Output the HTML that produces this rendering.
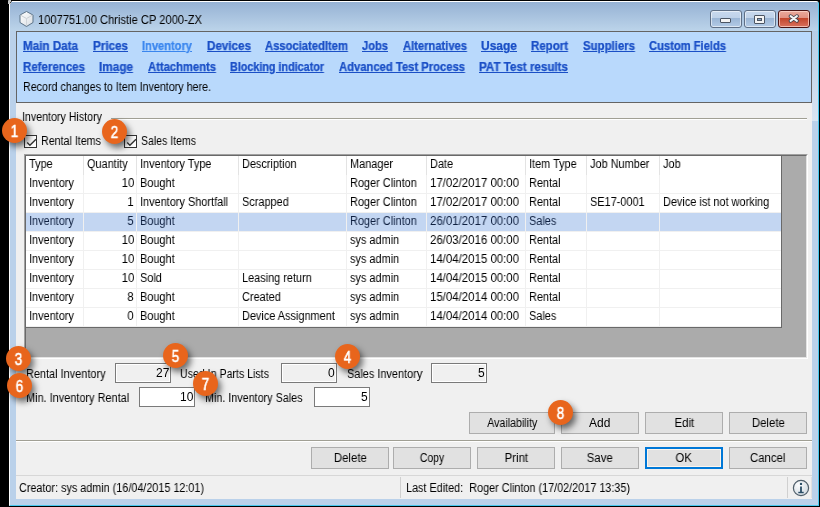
<!DOCTYPE html>
<html><head><meta charset="utf-8">
<style>
*{margin:0;padding:0;box-sizing:border-box}
html,body{width:820px;height:507px;overflow:hidden;background:#000}
body{position:relative;font-family:"Liberation Sans",sans-serif;font-size:12px;color:#000}
.a{position:absolute}
.t{position:absolute;white-space:pre;line-height:1.117;will-change:transform}
.frame{left:9px;top:1px;width:810px;height:505px;background:#bad1ea;border-left:1px solid #fff;border-top:1px solid #fff;border-right:1px solid #48c8ee;border-bottom:1px solid #48c8ee;border-top-left-radius:3px;border-top-right-radius:3px}
.title{left:10px;top:2px;width:808px;height:29px;background:linear-gradient(#96b2d4,#bcd4ea);border-top-left-radius:2px;border-top-right-radius:2px}
.content{left:16px;top:31px;width:796px;height:468px;background:#f0f0f0}
.panel{left:16px;top:31px;width:796px;height:72px;background:#b9d9fc;border:1px solid #646464}
.hl{position:absolute;height:1px}
.vl{position:absolute;width:1px}
.tbx{position:absolute;width:56px;height:20px;border:1px solid #7a7a7a;background:#fff}
.tbx.ro{background:#f0f0f0;box-shadow:inset 0 0 0 1px #fff}
.tbx span{position:absolute;right:1px;top:2px;line-height:14px;font-size:12px;display:inline-block;transform-origin:100% 0;transform:scaleX(1);will-change:transform}
.btn{position:absolute;width:78px;height:22px;border:1px solid #adadad;background:#e1e1e1;text-align:center;line-height:21px;font-size:12px}
.btn span{display:inline-block;transform:scaleX(.95);will-change:transform}
.btn.def{border:2px solid #0078d7;box-shadow:inset 0 0 0 1px #fdf5ec;line-height:19px}
.cb{position:absolute;width:13px;height:13px;border:1px solid #333;background:#fff}
.badge{position:absolute;width:25px;height:25px;border-radius:50%;background:#e8651c;color:#fff;font-weight:normal;font-size:16px;line-height:25px;text-align:center;box-shadow:3px 4px 6px rgba(0,0,0,.55);-webkit-text-stroke:.6px #fff}
.tbtn{position:absolute;top:10px;width:32px;height:18px;border:1px solid #5e6f86;border-radius:3px;background:linear-gradient(#c8d9ee 0,#bfd2e9 42%,#9ab5d5 44%,#b3cbe6 100%);box-shadow:inset 0 0 0 1px rgba(255,255,255,.55)}
.tbtn.cl{border-color:#4a1414;background:linear-gradient(#e9aa9c 0,#e29283 42%,#c1442a 44%,#d9725e 100%);box-shadow:inset 0 0 0 1px rgba(255,220,210,.7)}
.badge b{position:relative;top:1px;display:inline-block;font-weight:normal;transform:scaleX(.84);will-change:transform}
</style></head><body>
<div class="a frame"></div>
<div class="a title"></div>
<div class="a content"></div>
<div class="a" style="left:812px;top:31px;width:6px;height:90px;background:linear-gradient(#b7cde6,#d8e5f2)"></div>
<div class="a" style="left:8px;top:0;width:3px;height:4px;background:#c4c4c4;border-top-left-radius:1px"></div><div class="a" style="left:10px;top:2px;width:1px;height:1px;background:#404040"></div><div class="a" style="left:11px;top:1px;width:1px;height:1px;background:#606060"></div>

<!-- title icon -->
<svg class="a" style="left:18px;top:10px" width="17" height="18" viewBox="0 0 17 18">
 <defs><linearGradient id="cg" x1="0" y1="0" x2="1" y2="1"><stop offset="0" stop-color="#fff"/><stop offset="1" stop-color="#d8dde2"/></linearGradient></defs>
 <path d="M8.5 1.5 L15 5 L15 12.5 L8.5 16.5 L2 12.5 L2 5 Z" fill="url(#cg)" stroke="#5d7489" stroke-width="1"/>
 <path d="M2.5 5.2 L8.5 8.5 L14.5 5.2" fill="none" stroke="#c9ced4" stroke-width="1"/>
 <path d="M8.5 8.5 L8.5 16" stroke="#cfd4d9" stroke-width="1"/>
</svg>

<!-- title buttons -->
<div class="tbtn" style="left:710px"><div class="a" style="left:9px;top:7px;width:11px;height:5px;background:#f4f4f4;border:1px solid #4b5563;border-radius:1px"></div></div>
<div class="tbtn" style="left:744px"><div class="a" style="left:9px;top:4px;width:11px;height:9px;background:#f4f4f4;border:1px solid #4b5563;border-radius:1px"><div class="a" style="left:2px;top:2px;width:5px;height:3px;background:#8aa6c6;border:1px solid #4b5563"></div></div></div>
<div class="tbtn cl" style="left:778px">
<svg class="a" style="left:7.5px;top:3px" width="14" height="11" viewBox="0 0 14 11"><path d="M3.6 2.2 L9.9 6.8 M9.9 2.2 L3.6 6.8" stroke="#3a3f4a" stroke-width="3.7" stroke-linecap="round"/><path d="M3.6 2.2 L9.9 6.8 M9.9 2.2 L3.6 6.8" stroke="#f4f4f4" stroke-width="2.1" stroke-linecap="round"/></svg>
</div>

<!-- link panel -->
<div class="a panel"></div>

<!-- group line -->
<div class="hl" style="left:111px;top:118px;width:696px;background:#a09f94"></div>
<div class="hl" style="left:111px;top:119px;width:696px;background:#fff"></div>

<!-- checkboxes -->
<div class="cb" style="left:24px;top:135px"><svg class="a" style="left:1px;top:1px" width="11" height="11"><path d="M1.2 5.6 L3.9 8.2 L10 2.2" fill="none" stroke="#333" stroke-width="1.4"/></svg></div>
<div class="cb" style="left:124px;top:135px"><svg class="a" style="left:1px;top:1px" width="11" height="11"><path d="M1.2 5.6 L3.9 8.2 L10 2.2" fill="none" stroke="#333" stroke-width="1.4"/></svg></div>

<!-- grid -->
<div class="a" style="left:24px;top:154px;width:784px;height:205px;background:#ababab;border-top:1px solid #a0a0a0;border-left:1px solid #a0a0a0;border-right:1px solid #fff;border-bottom:1px solid #fff"></div>
<div class="a" style="left:25px;top:155px;width:782px;height:203px;border-top:1px solid #696969;border-left:1px solid #696969;border-right:1px solid #e3e3e3;border-bottom:1px solid #e3e3e3"></div>
<div class="a" style="left:26px;top:156px;width:756px;height:171px;background:#fff"></div>
<div class="a" style="left:26px;top:213px;width:755px;height:18px;background:#c3d6f2"></div>
<div class="vl" style="left:83px;top:156px;height:19px;background:#e3e3e3"></div>
<div class="vl" style="left:83px;top:175px;height:152px;background:#f0f0f0"></div>
<div class="vl" style="left:136px;top:156px;height:19px;background:#e3e3e3"></div>
<div class="vl" style="left:136px;top:175px;height:152px;background:#f0f0f0"></div>
<div class="vl" style="left:238px;top:156px;height:19px;background:#e3e3e3"></div>
<div class="vl" style="left:238px;top:175px;height:152px;background:#f0f0f0"></div>
<div class="vl" style="left:346px;top:156px;height:19px;background:#e3e3e3"></div>
<div class="vl" style="left:346px;top:175px;height:152px;background:#f0f0f0"></div>
<div class="vl" style="left:426px;top:156px;height:19px;background:#e3e3e3"></div>
<div class="vl" style="left:426px;top:175px;height:152px;background:#f0f0f0"></div>
<div class="vl" style="left:525px;top:156px;height:19px;background:#e3e3e3"></div>
<div class="vl" style="left:525px;top:175px;height:152px;background:#f0f0f0"></div>
<div class="vl" style="left:586px;top:156px;height:19px;background:#e3e3e3"></div>
<div class="vl" style="left:586px;top:175px;height:152px;background:#f0f0f0"></div>
<div class="vl" style="left:659px;top:156px;height:19px;background:#e3e3e3"></div>
<div class="vl" style="left:659px;top:175px;height:152px;background:#f0f0f0"></div>
<div class="hl" style="left:26px;top:193px;width:755px;background:#f0f0f0"></div>
<div class="hl" style="left:26px;top:212px;width:755px;background:#f0f0f0"></div>
<div class="hl" style="left:26px;top:231px;width:755px;background:#f0f0f0"></div>
<div class="hl" style="left:26px;top:250px;width:755px;background:#f0f0f0"></div>
<div class="hl" style="left:26px;top:269px;width:755px;background:#f0f0f0"></div>
<div class="hl" style="left:26px;top:288px;width:755px;background:#f0f0f0"></div>
<div class="hl" style="left:26px;top:307px;width:755px;background:#f0f0f0"></div>
<div class="hl" style="left:26px;top:326px;width:755px;background:#f0f0f0"></div>
<div class="hl" style="left:26px;top:327px;width:756px;background:#696969"></div>
<div class="vl" style="left:781px;top:156px;height:172px;background:#696969"></div>

<!-- textboxes -->
<div class="tbx ro" style="left:115px;top:363px"><span>27</span></div>
<div class="tbx ro" style="left:281px;top:363px"><span>0</span></div>
<div class="tbx ro" style="left:431px;top:363px"><span>5</span></div>
<div class="tbx" style="left:139px;top:387px"><span>10</span></div>
<div class="tbx" style="left:314px;top:387px"><span>5</span></div>

<!-- buttons row 1 -->
<div class="btn" style="left:469px;top:412px;width:86px"><span style="transform:scaleX(.885)">Availability</span></div>
<div class="btn" style="left:561px;top:412px"><span style="transform:scaleX(1)">Add</span></div>
<div class="btn" style="left:645px;top:412px"><span>Edit</span></div>
<div class="btn" style="left:729px;top:412px"><span>Delete</span></div>

<div class="hl" style="left:16px;top:440px;width:796px;background:#a09f94"></div>
<div class="hl" style="left:16px;top:441px;width:796px;background:#fff"></div>

<!-- buttons row 2 -->
<div class="btn" style="left:311px;top:447px"><span>Delete</span></div>
<div class="btn" style="left:393px;top:447px"><span style="transform:scaleX(.87)">Copy</span></div>
<div class="btn" style="left:477px;top:447px"><span>Print</span></div>
<div class="btn" style="left:561px;top:447px"><span>Save</span></div>
<div class="btn def" style="left:645px;top:447px"><span>OK</span></div>
<div class="btn" style="left:729px;top:447px"><span>Cancel</span></div>

<!-- status bar -->
<div class="hl" style="left:16px;top:475px;width:796px;background:#d7d7d7"></div>
<div class="vl" style="left:400px;top:477px;height:21px;background:#d0d0d0"></div>
<div class="vl" style="left:787px;top:477px;height:21px;background:#d0d0d0"></div>
<div class="vl" style="left:811px;top:477px;height:21px;background:#e0e0e0"></div>
<svg class="a" style="left:792px;top:479px" width="18" height="18" viewBox="0 0 18 18">
 <defs><radialGradient id="ig" cx="0.35" cy="0.3" r="0.8"><stop offset="0" stop-color="#fbfcfd"/><stop offset="1" stop-color="#cfd8df"/></radialGradient></defs>
 <circle cx="9" cy="9" r="7.6" fill="url(#ig)" stroke="#4f5e6a" stroke-width="1.2"/>
 <circle cx="9" cy="4.9" r="1.2" fill="#2a4d66"/>
 <path d="M9 7.5 V13" stroke="#2a4d66" stroke-width="1.8"/>
 <path d="M6.3 13.5 H11.7" stroke="#2a4d66" stroke-width="1.4"/>
</svg>

<div class="t" style="top:14.14px;font-size:12px;font-weight:400;color:#000;left:38px;transform-origin:0 0;transform:scaleX(0.9288);">1007751.00 Christie CP 2000-ZX</div>
<div class="t" style="top:40.14px;font-size:12px;font-weight:700;color:#1a4fc6;left:23px;transform-origin:0 0;transform:scaleX(0.9702);text-decoration:underline;-webkit-text-stroke:.25px #1a4fc6;">Main Data</div>
<div class="t" style="top:40.14px;font-size:12px;font-weight:700;color:#1a4fc6;left:93px;transform-origin:0 0;transform:scaleX(0.9714);text-decoration:underline;-webkit-text-stroke:.25px #1a4fc6;">Prices</div>
<div class="t" style="top:40.14px;font-size:12px;font-weight:700;color:#3a86ee;left:142px;transform-origin:0 0;transform:scaleX(0.9257);text-decoration:underline;-webkit-text-stroke:.25px #3a86ee;">Inventory</div>
<div class="t" style="top:40.14px;font-size:12px;font-weight:700;color:#1a4fc6;left:207px;transform-origin:0 0;transform:scaleX(0.9697);text-decoration:underline;-webkit-text-stroke:.25px #1a4fc6;">Devices</div>
<div class="t" style="top:40.14px;font-size:12px;font-weight:700;color:#1a4fc6;left:265px;transform-origin:0 0;transform:scaleX(0.9357);text-decoration:underline;-webkit-text-stroke:.25px #1a4fc6;">AssociatedItem</div>
<div class="t" style="top:40.14px;font-size:12px;font-weight:700;color:#1a4fc6;left:362px;transform-origin:0 0;transform:scaleX(0.9281);text-decoration:underline;-webkit-text-stroke:.25px #1a4fc6;">Jobs</div>
<div class="t" style="top:40.14px;font-size:12px;font-weight:700;color:#1a4fc6;left:403px;transform-origin:0 0;transform:scaleX(0.9315);text-decoration:underline;-webkit-text-stroke:.25px #1a4fc6;">Alternatives</div>
<div class="t" style="top:40.14px;font-size:12px;font-weight:700;color:#1a4fc6;left:481px;transform-origin:0 0;transform:scaleX(0.9991);text-decoration:underline;-webkit-text-stroke:.25px #1a4fc6;">Usage</div>
<div class="t" style="top:40.14px;font-size:12px;font-weight:700;color:#1a4fc6;left:531px;transform-origin:0 0;transform:scaleX(0.9568);text-decoration:underline;-webkit-text-stroke:.25px #1a4fc6;">Report</div>
<div class="t" style="top:40.14px;font-size:12px;font-weight:700;color:#1a4fc6;left:583px;transform-origin:0 0;transform:scaleX(0.9509);text-decoration:underline;-webkit-text-stroke:.25px #1a4fc6;">Suppliers</div>
<div class="t" style="top:40.14px;font-size:12px;font-weight:700;color:#1a4fc6;left:649px;transform-origin:0 0;transform:scaleX(0.9312);text-decoration:underline;-webkit-text-stroke:.25px #1a4fc6;">Custom Fields</div>
<div class="t" style="top:61.14px;font-size:12px;font-weight:700;color:#1a4fc6;left:23px;transform-origin:0 0;transform:scaleX(0.9580);text-decoration:underline;-webkit-text-stroke:.25px #1a4fc6;">References</div>
<div class="t" style="top:61.14px;font-size:12px;font-weight:700;color:#1a4fc6;left:99px;transform-origin:0 0;transform:scaleX(0.9802);text-decoration:underline;-webkit-text-stroke:.25px #1a4fc6;">Image</div>
<div class="t" style="top:61.14px;font-size:12px;font-weight:700;color:#1a4fc6;left:148px;transform-origin:0 0;transform:scaleX(0.9355);text-decoration:underline;-webkit-text-stroke:.25px #1a4fc6;">Attachments</div>
<div class="t" style="top:61.14px;font-size:12px;font-weight:700;color:#1a4fc6;left:230px;transform-origin:0 0;transform:scaleX(0.8979);text-decoration:underline;-webkit-text-stroke:.25px #1a4fc6;">Blocking indicator</div>
<div class="t" style="top:61.14px;font-size:12px;font-weight:700;color:#1a4fc6;left:339px;transform-origin:0 0;transform:scaleX(0.9367);text-decoration:underline;-webkit-text-stroke:.25px #1a4fc6;">Advanced Test Process</div>
<div class="t" style="top:61.14px;font-size:12px;font-weight:700;color:#1a4fc6;left:479px;transform-origin:0 0;transform:scaleX(0.9671);text-decoration:underline;-webkit-text-stroke:.25px #1a4fc6;">PAT Test results</div>
<div class="t" style="top:81.14px;font-size:12px;font-weight:400;color:#000;left:23px;transform-origin:0 0;transform:scaleX(0.8919);">Record changes to Item Inventory here.</div>
<div class="t" style="top:111.14px;font-size:12px;font-weight:400;color:#000;left:22px;transform-origin:0 0;transform:scaleX(0.8886);">Inventory History</div>
<div class="t" style="top:135.14px;font-size:12px;font-weight:400;color:#000;left:41px;transform-origin:0 0;transform:scaleX(0.8907);">Rental Items</div>
<div class="t" style="top:135.14px;font-size:12px;font-weight:400;color:#000;left:141px;transform-origin:0 0;transform:scaleX(0.8771);">Sales Items</div>
<div class="t" style="top:158.14px;font-size:12px;font-weight:400;color:#000;left:29px;transform-origin:0 0;transform:scaleX(0.9100);">Type</div>
<div class="t" style="top:158.14px;font-size:12px;font-weight:400;color:#000;left:87px;transform-origin:0 0;transform:scaleX(0.9100);">Quantity</div>
<div class="t" style="top:158.14px;font-size:12px;font-weight:400;color:#000;left:140px;transform-origin:0 0;transform:scaleX(0.9100);">Inventory Type</div>
<div class="t" style="top:158.14px;font-size:12px;font-weight:400;color:#000;left:242px;transform-origin:0 0;transform:scaleX(0.9100);">Description</div>
<div class="t" style="top:158.14px;font-size:12px;font-weight:400;color:#000;left:350px;transform-origin:0 0;transform:scaleX(0.9100);">Manager</div>
<div class="t" style="top:158.14px;font-size:12px;font-weight:400;color:#000;left:430px;transform-origin:0 0;transform:scaleX(0.9100);">Date</div>
<div class="t" style="top:158.14px;font-size:12px;font-weight:400;color:#000;left:529px;transform-origin:0 0;transform:scaleX(0.9100);">Item Type</div>
<div class="t" style="top:158.14px;font-size:12px;font-weight:400;color:#000;left:590px;transform-origin:0 0;transform:scaleX(0.9100);">Job Number</div>
<div class="t" style="top:158.14px;font-size:12px;font-weight:400;color:#000;left:663px;transform-origin:0 0;transform:scaleX(0.9100);">Job</div>
<div class="t" style="top:177.14px;font-size:12px;font-weight:400;color:#000;left:29px;transform-origin:0 0;transform:scaleX(0.9100);">Inventory</div>
<div class="t" style="top:177.14px;font-size:12px;font-weight:400;color:#000;right:686px;transform-origin:100% 0;transform:scaleX(0.9500);">10</div>
<div class="t" style="top:177.14px;font-size:12px;font-weight:400;color:#000;left:140px;transform-origin:0 0;transform:scaleX(0.9100);">Bought</div>
<div class="t" style="top:177.14px;font-size:12px;font-weight:400;color:#000;left:350px;transform-origin:0 0;transform:scaleX(0.9100);">Roger Clinton</div>
<div class="t" style="top:177.14px;font-size:12px;font-weight:400;color:#000;left:430px;transform-origin:0 0;transform:scaleX(0.9527);">17/02/2017 00:00</div>
<div class="t" style="top:177.14px;font-size:12px;font-weight:400;color:#000;left:529px;transform-origin:0 0;transform:scaleX(0.9100);">Rental</div>
<div class="t" style="top:196.14px;font-size:12px;font-weight:400;color:#000;left:29px;transform-origin:0 0;transform:scaleX(0.9100);">Inventory</div>
<div class="t" style="top:196.14px;font-size:12px;font-weight:400;color:#000;right:686px;transform-origin:100% 0;transform:scaleX(0.9500);">1</div>
<div class="t" style="top:196.14px;font-size:12px;font-weight:400;color:#000;left:140px;transform-origin:0 0;transform:scaleX(0.9100);">Inventory Shortfall</div>
<div class="t" style="top:196.14px;font-size:12px;font-weight:400;color:#000;left:242px;transform-origin:0 0;transform:scaleX(0.9100);">Scrapped</div>
<div class="t" style="top:196.14px;font-size:12px;font-weight:400;color:#000;left:350px;transform-origin:0 0;transform:scaleX(0.9100);">Roger Clinton</div>
<div class="t" style="top:196.14px;font-size:12px;font-weight:400;color:#000;left:430px;transform-origin:0 0;transform:scaleX(0.9527);">17/02/2017 00:00</div>
<div class="t" style="top:196.14px;font-size:12px;font-weight:400;color:#000;left:529px;transform-origin:0 0;transform:scaleX(0.9100);">Rental</div>
<div class="t" style="top:196.14px;font-size:12px;font-weight:400;color:#000;left:590px;transform-origin:0 0;transform:scaleX(0.9100);">SE17-0001</div>
<div class="t" style="top:196.14px;font-size:12px;font-weight:400;color:#000;left:663px;transform-origin:0 0;transform:scaleX(0.9100);">Device ist not working</div>
<div class="t" style="top:215.14px;font-size:12px;font-weight:400;color:#0f2040;left:29px;transform-origin:0 0;transform:scaleX(0.9100);">Inventory</div>
<div class="t" style="top:215.14px;font-size:12px;font-weight:400;color:#0f2040;right:686px;transform-origin:100% 0;transform:scaleX(0.9500);">5</div>
<div class="t" style="top:215.14px;font-size:12px;font-weight:400;color:#0f2040;left:140px;transform-origin:0 0;transform:scaleX(0.9100);">Bought</div>
<div class="t" style="top:215.14px;font-size:12px;font-weight:400;color:#0f2040;left:350px;transform-origin:0 0;transform:scaleX(0.9100);">Roger Clinton</div>
<div class="t" style="top:215.14px;font-size:12px;font-weight:400;color:#0f2040;left:430px;transform-origin:0 0;transform:scaleX(0.9527);">26/01/2017 00:00</div>
<div class="t" style="top:215.14px;font-size:12px;font-weight:400;color:#0f2040;left:529px;transform-origin:0 0;transform:scaleX(0.9100);">Sales</div>
<div class="t" style="top:234.14px;font-size:12px;font-weight:400;color:#000;left:29px;transform-origin:0 0;transform:scaleX(0.9100);">Inventory</div>
<div class="t" style="top:234.14px;font-size:12px;font-weight:400;color:#000;right:686px;transform-origin:100% 0;transform:scaleX(0.9500);">10</div>
<div class="t" style="top:234.14px;font-size:12px;font-weight:400;color:#000;left:140px;transform-origin:0 0;transform:scaleX(0.9100);">Bought</div>
<div class="t" style="top:234.14px;font-size:12px;font-weight:400;color:#000;left:350px;transform-origin:0 0;transform:scaleX(0.9100);">sys admin</div>
<div class="t" style="top:234.14px;font-size:12px;font-weight:400;color:#000;left:430px;transform-origin:0 0;transform:scaleX(0.9527);">26/03/2016 00:00</div>
<div class="t" style="top:234.14px;font-size:12px;font-weight:400;color:#000;left:529px;transform-origin:0 0;transform:scaleX(0.9100);">Rental</div>
<div class="t" style="top:253.14px;font-size:12px;font-weight:400;color:#000;left:29px;transform-origin:0 0;transform:scaleX(0.9100);">Inventory</div>
<div class="t" style="top:253.14px;font-size:12px;font-weight:400;color:#000;right:686px;transform-origin:100% 0;transform:scaleX(0.9500);">10</div>
<div class="t" style="top:253.14px;font-size:12px;font-weight:400;color:#000;left:140px;transform-origin:0 0;transform:scaleX(0.9100);">Bought</div>
<div class="t" style="top:253.14px;font-size:12px;font-weight:400;color:#000;left:350px;transform-origin:0 0;transform:scaleX(0.9100);">sys admin</div>
<div class="t" style="top:253.14px;font-size:12px;font-weight:400;color:#000;left:430px;transform-origin:0 0;transform:scaleX(0.9527);">14/04/2015 00:00</div>
<div class="t" style="top:253.14px;font-size:12px;font-weight:400;color:#000;left:529px;transform-origin:0 0;transform:scaleX(0.9100);">Rental</div>
<div class="t" style="top:272.14px;font-size:12px;font-weight:400;color:#000;left:29px;transform-origin:0 0;transform:scaleX(0.9100);">Inventory</div>
<div class="t" style="top:272.14px;font-size:12px;font-weight:400;color:#000;right:686px;transform-origin:100% 0;transform:scaleX(0.9500);">10</div>
<div class="t" style="top:272.14px;font-size:12px;font-weight:400;color:#000;left:140px;transform-origin:0 0;transform:scaleX(0.9100);">Sold</div>
<div class="t" style="top:272.14px;font-size:12px;font-weight:400;color:#000;left:242px;transform-origin:0 0;transform:scaleX(0.9100);">Leasing return</div>
<div class="t" style="top:272.14px;font-size:12px;font-weight:400;color:#000;left:350px;transform-origin:0 0;transform:scaleX(0.9100);">sys admin</div>
<div class="t" style="top:272.14px;font-size:12px;font-weight:400;color:#000;left:430px;transform-origin:0 0;transform:scaleX(0.9527);">14/04/2015 00:00</div>
<div class="t" style="top:272.14px;font-size:12px;font-weight:400;color:#000;left:529px;transform-origin:0 0;transform:scaleX(0.9100);">Rental</div>
<div class="t" style="top:291.14px;font-size:12px;font-weight:400;color:#000;left:29px;transform-origin:0 0;transform:scaleX(0.9100);">Inventory</div>
<div class="t" style="top:291.14px;font-size:12px;font-weight:400;color:#000;right:686px;transform-origin:100% 0;transform:scaleX(0.9500);">8</div>
<div class="t" style="top:291.14px;font-size:12px;font-weight:400;color:#000;left:140px;transform-origin:0 0;transform:scaleX(0.9100);">Bought</div>
<div class="t" style="top:291.14px;font-size:12px;font-weight:400;color:#000;left:242px;transform-origin:0 0;transform:scaleX(0.9100);">Created</div>
<div class="t" style="top:291.14px;font-size:12px;font-weight:400;color:#000;left:350px;transform-origin:0 0;transform:scaleX(0.9100);">sys admin</div>
<div class="t" style="top:291.14px;font-size:12px;font-weight:400;color:#000;left:430px;transform-origin:0 0;transform:scaleX(0.9527);">15/04/2014 00:00</div>
<div class="t" style="top:291.14px;font-size:12px;font-weight:400;color:#000;left:529px;transform-origin:0 0;transform:scaleX(0.9100);">Rental</div>
<div class="t" style="top:310.14px;font-size:12px;font-weight:400;color:#000;left:29px;transform-origin:0 0;transform:scaleX(0.9100);">Inventory</div>
<div class="t" style="top:310.14px;font-size:12px;font-weight:400;color:#000;right:686px;transform-origin:100% 0;transform:scaleX(0.9500);">0</div>
<div class="t" style="top:310.14px;font-size:12px;font-weight:400;color:#000;left:140px;transform-origin:0 0;transform:scaleX(0.9100);">Bought</div>
<div class="t" style="top:310.14px;font-size:12px;font-weight:400;color:#000;left:242px;transform-origin:0 0;transform:scaleX(0.9100);">Device Assignment</div>
<div class="t" style="top:310.14px;font-size:12px;font-weight:400;color:#000;left:350px;transform-origin:0 0;transform:scaleX(0.9100);">sys admin</div>
<div class="t" style="top:310.14px;font-size:12px;font-weight:400;color:#000;left:430px;transform-origin:0 0;transform:scaleX(0.9527);">14/04/2014 00:00</div>
<div class="t" style="top:310.14px;font-size:12px;font-weight:400;color:#000;left:529px;transform-origin:0 0;transform:scaleX(0.9100);">Sales</div>
<div class="t" style="top:368.14px;font-size:12px;font-weight:400;color:#000;left:26px;transform-origin:0 0;transform:scaleX(0.9100);">Rental Inventory</div>
<div class="t" style="top:368.14px;font-size:12px;font-weight:400;color:#000;left:180px;transform-origin:0 0;transform:scaleX(0.8840);">Used In Parts Lists</div>
<div class="t" style="top:368.14px;font-size:12px;font-weight:400;color:#000;left:347px;transform-origin:0 0;transform:scaleX(0.9100);">Sales Inventory</div>
<div class="t" style="top:392.14px;font-size:12px;font-weight:400;color:#000;left:26px;transform-origin:0 0;transform:scaleX(0.9100);">Min. Inventory Rental</div>
<div class="t" style="top:392.14px;font-size:12px;font-weight:400;color:#000;left:205px;transform-origin:0 0;transform:scaleX(0.8970);">Min. Inventory Sales</div>
<div class="t" style="top:482.14px;font-size:12px;font-weight:400;color:#000;left:19px;transform-origin:0 0;transform:scaleX(0.9004);">Creator: sys admin (16/04/2015 12:01)</div>
<div class="t" style="top:482.14px;font-size:12px;font-weight:400;color:#000;left:406px;transform-origin:0 0;transform:scaleX(0.9026);">Last Edited:  Roger Clinton (17/02/2017 13:35)</div>

<!-- badges -->
<div class="badge" style="left:2px;top:118px"><b>1</b></div>
<div class="badge" style="left:102px;top:119px"><b>2</b></div>
<div class="badge" style="left:6px;top:346px"><b>3</b></div>
<div class="badge" style="left:335px;top:344px"><b>4</b></div>
<div class="badge" style="left:163px;top:343px"><b>5</b></div>
<div class="badge" style="left:7px;top:373px"><b>6</b></div>
<div class="badge" style="left:193px;top:371px"><b>7</b></div>
<div class="badge" style="left:548px;top:400px"><b>8</b></div>
</body></html>
